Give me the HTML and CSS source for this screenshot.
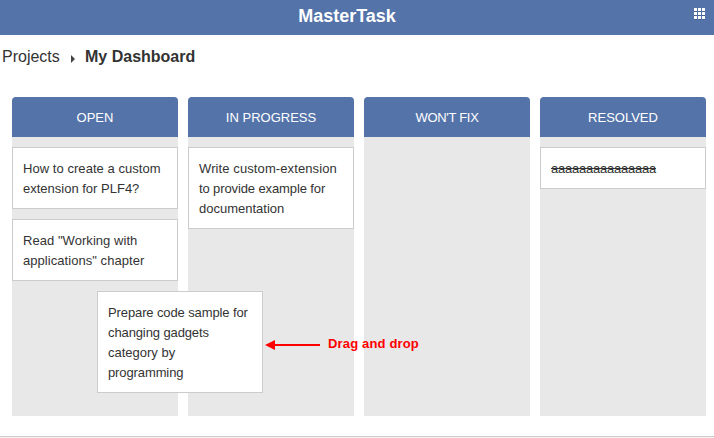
FILE: index.html
```
<!DOCTYPE html>
<html lang="en">
<head>
<meta charset="utf-8">
<title>MasterTask</title>
<link rel="stylesheet" href="styles.css">
</head>
<body>
<header class="topbar">
  <h1 class="brand">MasterTask</h1>
  <svg class="apps" width="12" height="13" viewBox="0 0 12 13" shape-rendering="crispEdges">
    <path class="apps-shadow" d="M0 3h3v1H0zM4 3h3v1H4zM8 3h3v1H8zM0 7h3v1H0zM4 7h3v1H4zM8 7h3v1H8zM0 11h3v1H0zM4 11h3v1H4zM8 11h3v1H8z"/>
    <path class="apps-dots" d="M0 0h3v3H0zM4 0h3v3H4zM8 0h3v3H8zM0 4h3v3H0zM4 4h3v3H4zM8 4h3v3H8zM0 8h3v3H0zM4 8h3v3H4zM8 8h3v3H8z"/>
  </svg>
</header>
<nav class="crumbs">
  <span class="crumb">Projects</span>
  <svg class="sep" width="4" height="8" viewBox="0 0 4 8"><path d="M0 0L4 4L0 8z"/></svg>
  <strong class="current">My Dashboard</strong>
</nav>
<main class="board">
  <section class="column">
    <h2 class="column-title">OPEN</h2>
    <div class="cards">
      <article class="card"><span class="loose">How to create a custom</span><br>extension for PLF4?</article>
      <article class="card"><span class="loose">Read "Working with</span><br><span class="loose">applications" chapter</span></article>
    </div>
  </section>
  <section class="column">
    <h2 class="column-title">IN PROGRESS</h2>
    <div class="cards">
      <article class="card"><span class="looser">Write custom-extension</span><br><span class="tight">to provide example for</span><br>documentation</article>
    </div>
  </section>
  <section class="column">
    <h2 class="column-title narrow">WON'T FIX</h2>
    <div class="cards"></div>
  </section>
  <section class="column">
    <h2 class="column-title">RESOLVED</h2>
    <div class="cards">
      <article class="card done">aaaaaaaaaaaaaaa</article>
    </div>
  </section>
  <article class="card dragging"><span class="tight">Prepare code sample for</span><br><span class="tight">changing gadgets</span><br>category by<br><span class="tight">programming</span></article>
  <div class="hint">
    <svg width="55" height="10" viewBox="0 0 55 10"><path d="M0 5L10 0V4H55V6H10V10z"/></svg>
    <span>Drag and drop</span>
  </div>
</main>
<footer class="footer"></footer>
</body>
</html>
```
FILE: styles.css
```
* { box-sizing: border-box; }
body {
  margin: 0;
  height: 438px;
  overflow: hidden;
  background: #fff;
  color: #333;
  font: 13px/20px "Liberation Sans", Arial, sans-serif;
}
.topbar {
  position: relative;
  height: 35px;
  background: #5473a9;
  color: #fff;
}
.brand {
  margin: 0;
  padding: 6px 20px 0 0;
  text-align: center;
  font-size: 18px;
  line-height: 20px;
}
.apps { position: absolute; left: 694px; top: 8px; }
.apps-dots { fill: #fff; }
.apps-shadow { fill: #46618f; }
.crumbs {
  display: flex;
  align-items: center;
  height: 44px;
  padding-left: 2px;
  font-size: 16px;
}
.crumb { width: 69px; }
.sep { margin: 3px 10px 0 0; fill: #444; }
.board {
  position: relative;
  display: grid;
  grid-template-columns: repeat(4, 166px);
  gap: 10px;
  height: 319px;
  margin: 18px 0 0 12px;
}
.column {
  display: flex;
  flex-direction: column;
  background: #e8e8e8;
  border-radius: 4px 4px 0 0;
}
.column-title {
  height: 40px;
  margin: 0;
  padding-top: 1px;
  border-radius: 4px 4px 0 0;
  background: #5473a9;
  color: #fff;
  font-size: 13px;
  font-weight: normal;
  line-height: 40px;
  text-align: center;
}
.narrow { letter-spacing: -0.3px; }
.cards {
  display: flex;
  flex-direction: column;
  gap: 10px;
  padding-top: 10px;
}
.card {
  padding: 11px 10px 9px;
  border: 1px solid #ccc;
  background: #fff;
  white-space: nowrap;
}
.loose { letter-spacing: 0.05px; }
.looser { letter-spacing: 0.1px; }
.tight { letter-spacing: -0.11px; }
.done { text-decoration: line-through; letter-spacing: -0.23px; }
.dragging {
  position: absolute;
  left: 85px;
  top: 194px;
  width: 166px;
}
.hint {
  position: absolute;
  left: 253px;
  top: 237px;
  display: flex;
  align-items: center;
  gap: 8px;
  color: #f00;
  font-weight: bold;
  letter-spacing: 0.16px;
  white-space: nowrap;
}
.hint svg { margin-top: 2px; fill: #f00; }
.footer {
  height: 2px;
  margin-top: 20px;
  border-top: 1px solid #ccc;
  background: #f5f3f3;
}
```
